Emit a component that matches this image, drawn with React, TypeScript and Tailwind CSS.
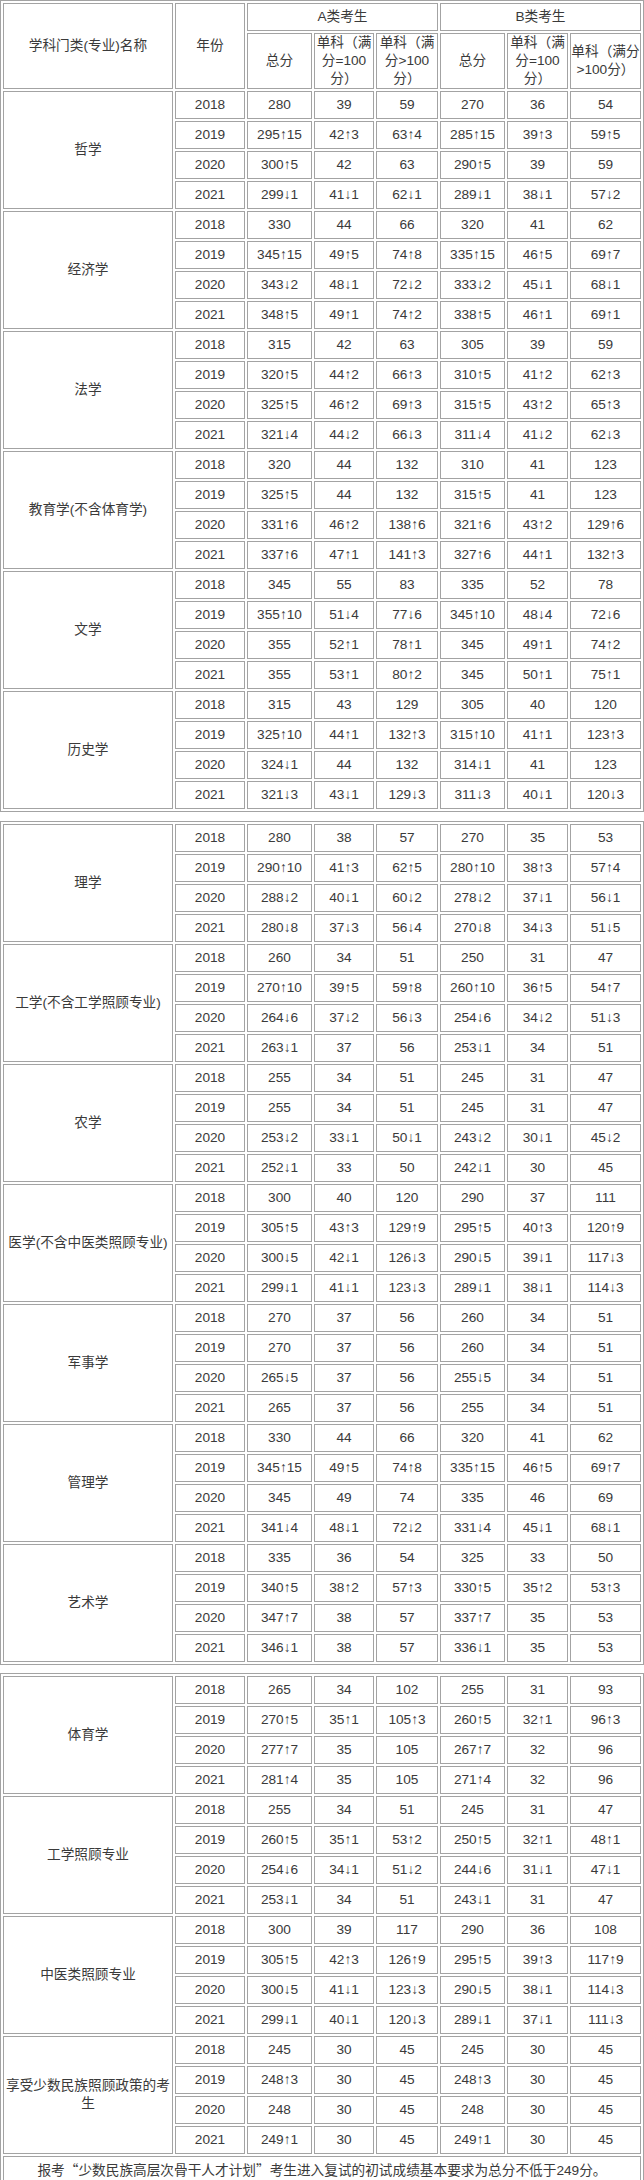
import React from 'react';

type Group = [string, string[]];

const T1: Group[] = [
  ['哲学', ['2018 280 39 59 270 36 54', '2019 295↑15 42↑3 63↑4 285↑15 39↑3 59↑5', '2020 300↑5 42 63 290↑5 39 59', '2021 299↓1 41↓1 62↓1 289↓1 38↓1 57↓2']],
  ['经济学', ['2018 330 44 66 320 41 62', '2019 345↑15 49↑5 74↑8 335↑15 46↑5 69↑7', '2020 343↓2 48↓1 72↓2 333↓2 45↓1 68↓1', '2021 348↑5 49↑1 74↑2 338↑5 46↑1 69↑1']],
  ['法学', ['2018 315 42 63 305 39 59', '2019 320↑5 44↑2 66↑3 310↑5 41↑2 62↑3', '2020 325↑5 46↑2 69↑3 315↑5 43↑2 65↑3', '2021 321↓4 44↓2 66↓3 311↓4 41↓2 62↓3']],
  ['教育学(不含体育学)', ['2018 320 44 132 310 41 123', '2019 325↑5 44 132 315↑5 41 123', '2020 331↑6 46↑2 138↑6 321↑6 43↑2 129↑6', '2021 337↑6 47↑1 141↑3 327↑6 44↑1 132↑3']],
  ['文学', ['2018 345 55 83 335 52 78', '2019 355↑10 51↓4 77↓6 345↑10 48↓4 72↓6', '2020 355 52↑1 78↑1 345 49↑1 74↑2', '2021 355 53↑1 80↑2 345 50↑1 75↑1']],
  ['历史学', ['2018 315 43 129 305 40 120', '2019 325↑10 44↑1 132↑3 315↑10 41↑1 123↑3', '2020 324↓1 44 132 314↓1 41 123', '2021 321↓3 43↓1 129↓3 311↓3 40↓1 120↓3']],
];

const T2: Group[] = [
  ['理学', ['2018 280 38 57 270 35 53', '2019 290↑10 41↑3 62↑5 280↑10 38↑3 57↑4', '2020 288↓2 40↓1 60↓2 278↓2 37↓1 56↓1', '2021 280↓8 37↓3 56↓4 270↓8 34↓3 51↓5']],
  ['工学(不含工学照顾专业)', ['2018 260 34 51 250 31 47', '2019 270↑10 39↑5 59↑8 260↑10 36↑5 54↑7', '2020 264↓6 37↓2 56↓3 254↓6 34↓2 51↓3', '2021 263↓1 37 56 253↓1 34 51']],
  ['农学', ['2018 255 34 51 245 31 47', '2019 255 34 51 245 31 47', '2020 253↓2 33↓1 50↓1 243↓2 30↓1 45↓2', '2021 252↓1 33 50 242↓1 30 45']],
  ['医学(不含中医类照顾专业)', ['2018 300 40 120 290 37 111', '2019 305↑5 43↑3 129↑9 295↑5 40↑3 120↑9', '2020 300↓5 42↓1 126↓3 290↓5 39↓1 117↓3', '2021 299↓1 41↓1 123↓3 289↓1 38↓1 114↓3']],
  ['军事学', ['2018 270 37 56 260 34 51', '2019 270 37 56 260 34 51', '2020 265↓5 37 56 255↓5 34 51', '2021 265 37 56 255 34 51']],
  ['管理学', ['2018 330 44 66 320 41 62', '2019 345↑15 49↑5 74↑8 335↑15 46↑5 69↑7', '2020 345 49 74 335 46 69', '2021 341↓4 48↓1 72↓2 331↓4 45↓1 68↓1']],
  ['艺术学', ['2018 335 36 54 325 33 50', '2019 340↑5 38↑2 57↑3 330↑5 35↑2 53↑3', '2020 347↑7 38 57 337↑7 35 53', '2021 346↓1 38 57 336↓1 35 53']],
];

const T3: Group[] = [
  ['体育学', ['2018 265 34 102 255 31 93', '2019 270↑5 35↑1 105↑3 260↑5 32↑1 96↑3', '2020 277↑7 35 105 267↑7 32 96', '2021 281↑4 35 105 271↑4 32 96']],
  ['工学照顾专业', ['2018 255 34 51 245 31 47', '2019 260↑5 35↑1 53↑2 250↑5 32↑1 48↑1', '2020 254↓6 34↓1 51↓2 244↓6 31↓1 47↓1', '2021 253↓1 34 51 243↓1 31 47']],
  ['中医类照顾专业', ['2018 300 39 117 290 36 108', '2019 305↑5 42↑3 126↑9 295↑5 39↑3 117↑9', '2020 300↓5 41↓1 123↓3 290↓5 38↓1 114↓3', '2021 299↓1 40↓1 120↓3 289↓1 37↓1 111↓3']],
  ['享受少数民族照顾政策的考生', ['2018 245 30 45 245 30 45', '2019 248↑3 30 45 248↑3 30 45', '2020 248 30 45 248 30 45', '2021 249↑1 30 45 249↑1 30 45']],
];

const cell = 'border border-[#a3a3a3] flex items-center justify-center text-center';

function Groups({ groups }: { groups: Group[] }) {
  return (
    <>
      {groups.map(([name, rows]) => (
        <React.Fragment key={name}>
          <div className={`${cell} row-span-4 col-start-1 px-0`}>{name}</div>
          {rows.map((r) =>
            r.split(' ').map((v, i) => (
              <div key={`${name}-${r}-${i}`} className={`${cell} h-[28px] whitespace-nowrap`}>
                {v}
              </div>
            ))
          )}
        </React.Fragment>
      ))}
    </>
  );
}

const grid =
  'grid grid-cols-[170px_70px_65px_60px_62px_65px_61px_71px] auto-rows-[28px] gap-[2px] p-[2px] border border-[#a3a3a3]';

const cjk = "font-['Noto_Sans_CJK_SC',sans-serif]";

export default function App() {
  return (
    <div className="w-[644px] h-[2180px] overflow-hidden bg-white text-[#3a3a3a] text-[13.66px] leading-[18px] font-['Liberation_Sans','Noto_Sans_CJK_SC',sans-serif]">
      <div className={`${grid} grid-rows-[28px_56px]`}>
        <div className={`${cell} row-span-2`}>学科门类(专业)名称</div>
        <div className={`${cell} row-span-2`}>年份</div>
        <div className={`${cell} col-span-3`}>A类考生</div>
        <div className={`${cell} col-span-3`}>B类考生</div>
        <div className={cell}>总分</div>
        <div className={cell}>
          单科（满
          <br />
          分=100
          <br />
          分）
        </div>
        <div className={cell}>
          单科（满
          <br />
          分&gt;100
          <br />
          分）
        </div>
        <div className={cell}>总分</div>
        <div className={cell}>
          单科（满
          <br />
          分=100
          <br />
          分）
        </div>
        <div className={`${cell} whitespace-nowrap`}>
          单科（满分
          <br />
          &gt;100分）
        </div>
        <Groups groups={T1} />
      </div>
      <div className={`${grid} mt-[9px]`}>
        <Groups groups={T2} />
      </div>
      <div className={`${grid} mt-[8px]`}>
        <Groups groups={T3} />
        <div className={`${cell} col-span-8`}>
          <span>
            报考<span className={cjk}>“</span>少数民族高层次骨干人才计划<span className={cjk}>”</span>考生进入复试的初试成绩基本要求为总分不低于249分。
          </span>
        </div>
      </div>
    </div>
  );
}
